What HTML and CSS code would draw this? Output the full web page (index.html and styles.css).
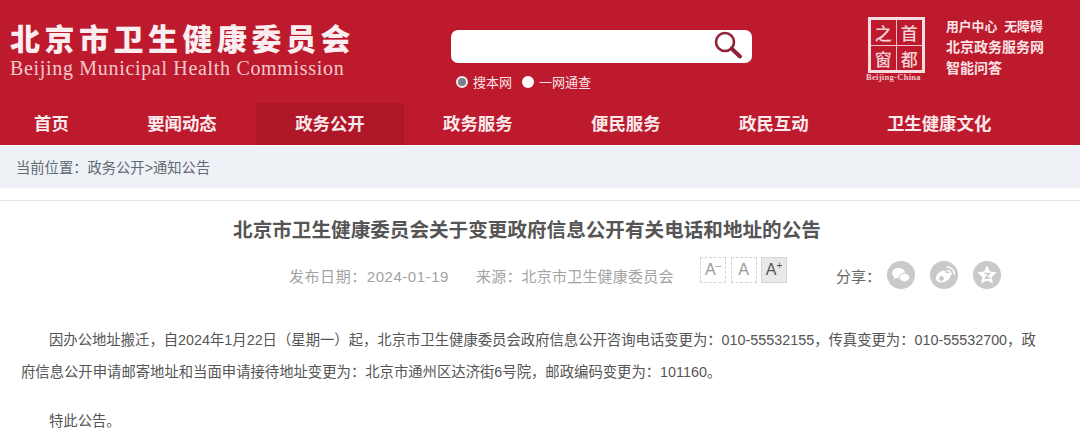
FILE: index.html
```html
<!DOCTYPE html>
<html lang="zh-CN">
<head>
    <meta charset="UTF-8">
    <title>北京市卫生健康委员会</title>
    <link rel="stylesheet" href="styles.css">
</head>
<body>
    <header class="header">
        <div class="top">
            <div class="brand">
                <div class="brand-cn">北京市卫生健康委员会</div>
                <div class="brand-en">Beijing Municipal Health Commission</div>
            </div>
            <div class="search">
                <div class="search-box">
                    <svg class="search-icon" width="30" height="30" viewBox="0 0 30 30">
                        <circle cx="12" cy="12" r="9" fill="none" stroke="#8f2238" stroke-width="2.6"/>
                        <path d="M18.5 18.5L27 26.5" stroke="#8f2238" stroke-width="4" stroke-linecap="round"/>
                    </svg>
                </div>
                <div class="search-opts">
                    <span class="radio radio-on"></span><span class="opt">搜本网</span>
                    <span class="radio"></span><span class="opt">一网通查</span>
                </div>
            </div>
            <div class="seal">
                <div class="seal-box">
                    <span class="seal-cell">之</span><span class="seal-cell">首</span><span class="seal-cell">窗</span><span class="seal-cell">都</span>
                </div>
                <div class="seal-en">Beijing-China</div>
            </div>
            <div class="links">
                <div class="links-first">用户中心&nbsp; 无障碍</div>
                <div>北京政务服务网</div>
                <div class="links-last">智能问答</div>
            </div>
        </div>
        <nav class="nav">
            <a class="nav-item">首页</a>
            <a class="nav-item">要闻动态</a>
            <a class="nav-item active">政务公开</a>
            <a class="nav-item">政务服务</a>
            <a class="nav-item">便民服务</a>
            <a class="nav-item">政民互动</a>
            <a class="nav-item">卫生健康文化</a>
        </nav>
    </header>

    <div class="crumb">当前位置：政务公开&gt;通知公告</div>

    <main class="article">
        <h1 class="title">北京市卫生健康委员会关于变更政府信息公开有关电话和地址的公告</h1>
        <div class="meta">
            <span class="date">发布日期：2024-01-19</span>
            <span class="source">来源：北京市卫生健康委员会</span>
            <div class="sizes">
                <span class="size">A<sup>–</sup></span>
                <span class="size">A</span>
                <span class="size size-on">A<sup>+</sup></span>
            </div>
            <span class="share">分享：</span>
            <span class="share-btn">
                <svg width="28" height="28" viewBox="0 0 28 28">
                    <circle cx="14" cy="14" r="14" fill="#c9c9c9"/>
                    <ellipse cx="11.5" cy="12" rx="6.5" ry="5.2" fill="#fff"/>
                    <path d="M7.5 15.5l-1 3 3.5-2z" fill="#fff"/>
                    <ellipse cx="17.5" cy="16.5" rx="5.2" ry="4.2" fill="#fff" stroke="#c9c9c9"/>
                </svg>
            </span>
            <span class="share-btn">
                <svg width="28" height="28" viewBox="0 0 28 28">
                    <circle cx="14" cy="14" r="14" fill="#c9c9c9"/>
                    <path d="M6 17c0-3.500 4.500-7.500 7.500-7.500 2 0 2.500 1.500 2 3 3-1 5-.5 5 1.500 .3 3.500-4.500 7.500-8.500 7.500-3.500 0-6-1.500-6-4.500z" fill="#fff"/>
                    <circle cx="11.500" cy="17.500" r="2.400" fill="#c9c9c9"/>
                    <path d="M16.500 9.500a4 4 0 0 1 4.500 4.500M16.500 6a7.500 7.500 0 0 1 8 8" fill="none" stroke="#fff" stroke-width="1.500"/>
                </svg>
            </span>
            <span class="share-btn">
                <svg width="28" height="28" viewBox="0 0 28 28">
                    <circle cx="14" cy="14" r="14" fill="#c9c9c9"/>
                    <path d="M14 4.500l2.900 6 6.600.9-4.800 4.600 1.200 6.500-5.900-3.100-5.900 3.100 1.200-6.500-4.800-4.600 6.600-.9z" fill="#fff"/>
                    <path d="M11.500 12.500h5l-4 4.500h5" fill="none" stroke="#c9c9c9" stroke-width="1.500"/>
                </svg>
            </span>
        </div>
        <p class="para">因办公地址搬迁，自2024年1月22日（星期一）起，北京市卫生健康委员会政府信息公开咨询电话变更为：010-55532155，传真变更为：010-55532700，政府信息公开申请邮寄地址和当面申请接待地址变更为：北京市通州区达济街6号院，邮政编码变更为：101160。</p>
        <p class="para para-end">特此公告。</p>
    </main>
</body>
</html>
```

FILE: styles.css
```css
body {
    margin: 0;
    background: #fff;
    font-family: "Liberation Sans", "Noto Sans CJK SC", sans-serif;
    overflow: hidden;
}
.header {
    height: 145px;
    background: #bd1a2d;
    color: #fff;
}
.top {
    display: flex;
    height: 103px;
}
.brand {
    width: 451px;
    padding: 18px 0 0 10px;
    box-sizing: border-box;
}
.brand-cn {
    font-family: "Noto Sans CJK SC", sans-serif;
    font-size: 30px;
    font-weight: 900;
    line-height: 38px;
    letter-spacing: 4.5px;
    color: #fbeef0;
}
.brand-en {
    font-family: "Liberation Serif", serif;
    font-size: 20px;
    line-height: 24px;
    letter-spacing: 0.68px;
    color: #f3c9ce;
}
.search {
    width: 417px;
    padding-top: 30px;
    box-sizing: border-box;
}
.search-box {
    display: flex;
    justify-content: flex-end;
    width: 301px;
    height: 33px;
    padding: 0 9px 0 0;
    box-sizing: border-box;
    background: #fff;
    border-radius: 7px;
}
.search-icon {
    flex: none;
}
.search-opts {
    display: flex;
    align-items: center;
    margin: 8px 0 0 5px;
    font-size: 13px;
    line-height: 20px;
    color: #fbe3e6;
}
.radio {
    width: 12px;
    height: 12px;
    margin-right: 5px;
    border-radius: 50%;
    background: #fff;
}
.radio-on {
    box-sizing: border-box;
    border: 2px solid #eee;
    background: #7d7f8a;
}
.opt {
    margin-right: 10px;
    padding-top: 2px;
}
.seal {
    width: 78px;
    padding-top: 17px;
    box-sizing: border-box;
}
.seal-box {
    display: grid;
    grid-template-columns: 1fr 1fr;
    width: 57px;
    height: 56px;
    box-sizing: border-box;
    border: 3px solid #f6dde0;
    font-family: "Noto Sans CJK SC", sans-serif;
    font-size: 17px;
    font-weight: 500;
    line-height: 25px;
    text-align: center;
    color: #f3d2d6;
}
.seal-cell:nth-child(odd) {
    border-right: 1px solid #f0c4ca;
}
.seal-cell:nth-child(-n+2) {
    border-bottom: 1px solid #f0c4ca;
}
.seal-en {
    width: 66px;
    margin-left: -2px;
    font-family: "Liberation Serif", serif;
    font-size: 8.5px;
    font-weight: bold;
    line-height: 9px;
    letter-spacing: 0.3px;
    color: #f3c9ce;
}
.links {
    padding-top: 17px;
    font-size: 14px;
    font-weight: bold;
    line-height: 20px;
    color: #fbe3e6;
}
.links-first {
    font-size: 12.8px;
}
.links-last {
    margin-top: 1px;
}
.nav {
    display: flex;
    height: 42px;
}
.nav-item {
    padding: 0 39.2px;
    font-size: 17.4px;
    font-weight: bold;
    line-height: 43px;
    color: #fbe9eb;
}
.nav-item:first-child {
    padding-left: 34px;
}
.active {
    background: #af1728;
}
.crumb {
    height: 42px;
    margin-top: 1px;
    padding-left: 16px;
    background: #eef1f6;
    font-size: 14.3px;
    line-height: 44px;
    color: #5f6b70;
}
.article {
    margin-top: 12px;
    padding: 0 40px 0 21px;
    border-top: 1px solid #e6e6e6;
    color: #555;
}
.title {
    margin: 15px 7px 0 0;
    font-size: 19.6px;
    line-height: 28px;
    text-align: center;
    color: #555;
}
.meta {
    display: flex;
    align-items: center;
    height: 34px;
    margin-top: 14px;
    padding-left: 268px;
    font-size: 15px;
    color: #a3a3a3;
}
.date {
    width: 187px;
    letter-spacing: 0.55px;
}
.source {
    width: 224px;
    letter-spacing: 0.2px;
}
.sizes {
    display: flex;
    gap: 4.5px;
    width: 136px;
    margin-bottom: 10px;
}
.size {
    width: 26px;
    height: 26px;
    box-sizing: border-box;
    border: 1px dashed #d5d5d5;
    font-size: 16px;
    line-height: 24px;
    text-align: center;
    color: #999;
}
.size sup {
    font-size: 10px;
    line-height: 0;
}
.size-on {
    border: 1px solid #d5d5d5;
    background: #e9e9e9;
    color: #555;
}
.share {
    width: 51px;
    color: #666;
}
.share-btn {
    display: flex;
    margin-right: 15px;
}
.para {
    margin: 32px 0 0;
    font-size: 14.35px;
    line-height: 32px;
    text-indent: 28px;
    color: #555;
}
.para-end {
    margin-top: 17px;
}
```
